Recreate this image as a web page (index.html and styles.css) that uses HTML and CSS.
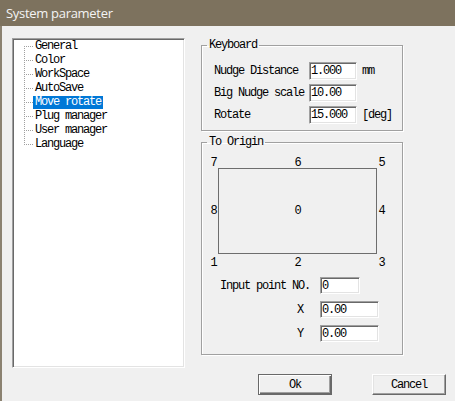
FILE: index.html
```html
<!DOCTYPE html>
<html lang="en">
<head>
    <meta charset="UTF-8">
    <title>System parameter</title>
    <link rel="stylesheet" href="styles.css">
</head>
<body>
    <div class="titlebar">System parameter</div>
    <div class="frame">
        <div class="content">
            <div class="tree">
                <ul class="tree-list">
                    <li><span class="node">General</span></li>
                    <li><span class="node">Color</span></li>
                    <li><span class="node">WorkSpace</span></li>
                    <li><span class="node">AutoSave</span></li>
                    <li><span class="node selected">Move rotate</span></li>
                    <li><span class="node">Plug manager</span></li>
                    <li><span class="node">User manager</span></li>
                    <li><span class="node">Language</span></li>
                </ul>
            </div>
            <div class="panel">
                <fieldset class="group keyboard">
                    <legend>Keyboard</legend>
                    <div class="kb-grid">
                        <label for="nudge">Nudge Distance</label>
                        <input type="text" id="nudge" value="1.000">
                        <span class="unit">mm</span>
                        <label for="big-nudge">Big Nudge scale</label>
                        <input type="text" id="big-nudge" value="10.00">
                        <span class="unit"></span>
                        <label for="rotate">Rotate</label>
                        <input type="text" id="rotate" value="15.000">
                        <span class="unit">[deg]</span>
                    </div>
                </fieldset>
                <fieldset class="group origin">
                    <legend>To Origin</legend>
                    <div class="diagram">
                        <span class="pt">7</span><span class="pt">6</span><span class="pt">5</span>
                        <span class="pt mid">8</span><div class="rect">0</div><span class="pt mid">4</span>
                        <span class="pt low">1</span><span class="pt low">2</span><span class="pt low">3</span>
                    </div>
                    <div class="point-grid">
                        <label for="point-no">Input point NO.</label>
                        <input type="text" id="point-no" class="short" value="0">
                        <label for="pos-x" class="axis">X</label>
                        <input type="text" id="pos-x" value="0.00">
                        <label for="pos-y" class="axis">Y</label>
                        <input type="text" id="pos-y" value="0.00">
                    </div>
                </fieldset>
            </div>
        </div>
        <div class="buttons">
            <button class="btn default">Ok</button>
            <button class="btn">Cancel</button>
        </div>
    </div>
</body>
</html>
```

FILE: styles.css
```css
html, body {
    margin: 0;
    padding: 0;
}
body {
    width: 455px;
    height: 401px;
    overflow: hidden;
    background-color: #f0f0f0;
    color: #000;
    font-family: 'Liberation Mono', monospace;
    font-size: 12px;
    letter-spacing: -1.2px;
    line-height: 12px;
    white-space: nowrap;
}
.titlebar {
    height: 26px;
    line-height: 26px;
    padding-left: 6px;
    background-color: #7d725e;
    color: #f4f4f4;
    font-family: 'Open Sans', sans-serif;
    font-size: 13px;
    letter-spacing: -0.3px;
}
.frame {
    height: 375px;
    box-sizing: border-box;
    border-left: 2px solid #8b8271;
}
.content {
    display: flex;
    padding-top: 12px;
}
.tree {
    margin-left: 10px;
    width: 173px;
    height: 330px;
    box-sizing: border-box;
    background: white;
    border: 1px solid;
    border-color: #a0a0a0 #fff #fff #a0a0a0;
    box-shadow: inset 1px 1px 0 #696969, inset -1px -1px 0 #e3e3e3;
}
.tree-list {
    list-style: none;
    margin: 0;
    padding: 0 0 0 11px;
    background-image: repeating-linear-gradient(to bottom, #a0a0a0 0 1px, transparent 1px 2px);
    background-size: 1px calc(100% - 14px);
    background-position: 11px 7px;
    background-repeat: no-repeat;
}
.tree-list li {
    display: flex;
    align-items: center;
    height: 14px;
}
.tree-list li::before {
    content: "";
    width: 9px;
    height: 1px;
    background-image: repeating-linear-gradient(to right, #a0a0a0 0 1px, transparent 1px 2px);
}
.node {
    padding: 0 2px;
    line-height: 13px;
}
.node.selected {
    background-color: #0078d7;
    color: white;
}
.panel {
    margin-left: 16px;
    width: 202px;
}
.group {
    margin: 0;
    padding: 0;
    border: 1px solid #a0a0a0;
    box-shadow: 1px 1px 0 #fff, inset 1px 1px 0 #fff;
}
.group legend {
    margin-left: 5px;
    padding: 0 2px;
    line-height: 12px;
}
.keyboard {
    margin-top: 1px;
}
.origin {
    margin-top: 5px;
}
.kb-grid {
    display: grid;
    grid-template-columns: 95px 48px auto;
    row-gap: 4px;
    align-items: center;
    margin: 11px 0 6px 12px;
}
.unit {
    margin-left: 5px;
}
input {
    height: 18px;
    box-sizing: border-box;
    width: 100%;
    margin: 0;
    padding: 0 0 0 1px;
    background: white;
    border: 1px solid;
    border-color: #a0a0a0 #fff #fff #a0a0a0;
    box-shadow: inset 1px 1px 0 #696969, inset -1px -1px 0 #e3e3e3;
    font: inherit;
    letter-spacing: inherit;
    color: #000;
    outline: none;
}
.diagram {
    display: grid;
    grid-template-columns: 9px 159px 9px;
    grid-template-rows: 11px 86px 15px;
    margin: 9px 0 0 7px;
}
.pt {
    text-align: center;
}
.pt.mid {
    align-self: center;
}
.pt.low {
    padding-top: 3px;
}
.rect {
    border: 1px solid #6d6d6d;
    display: flex;
    align-items: center;
    justify-content: center;
}
.point-grid {
    display: grid;
    grid-template-columns: 90px 59px;
    column-gap: 10px;
    row-gap: 7px;
    align-items: center;
    margin: 8px 0 12px 18px;
}
.point-grid input {
    height: 17px;
}
.point-grid input.short {
    width: 40px;
}
.axis {
    text-align: right;
    padding-right: 7px;
}
.buttons {
    display: flex;
    justify-content: flex-end;
    gap: 40px;
    margin-top: 6px;
    padding-right: 9px;
}
.btn {
    width: 74px;
    height: 21px;
    margin: 0;
    padding: 0;
    background-color: #f0f0f0;
    border: 1px solid;
    border-color: #fff #696969 #696969 #fff;
    box-shadow: inset -1px -1px 0 #a0a0a0, inset 1px 1px 0 #e3e3e3;
    font: inherit;
    letter-spacing: inherit;
    color: #000;
}
.btn.default {
    border-color: #696969;
    box-shadow: inset 1px 1px 0 #fff, inset -1px -1px 0 #696969, inset -2px -2px 0 #a0a0a0;
}
```
